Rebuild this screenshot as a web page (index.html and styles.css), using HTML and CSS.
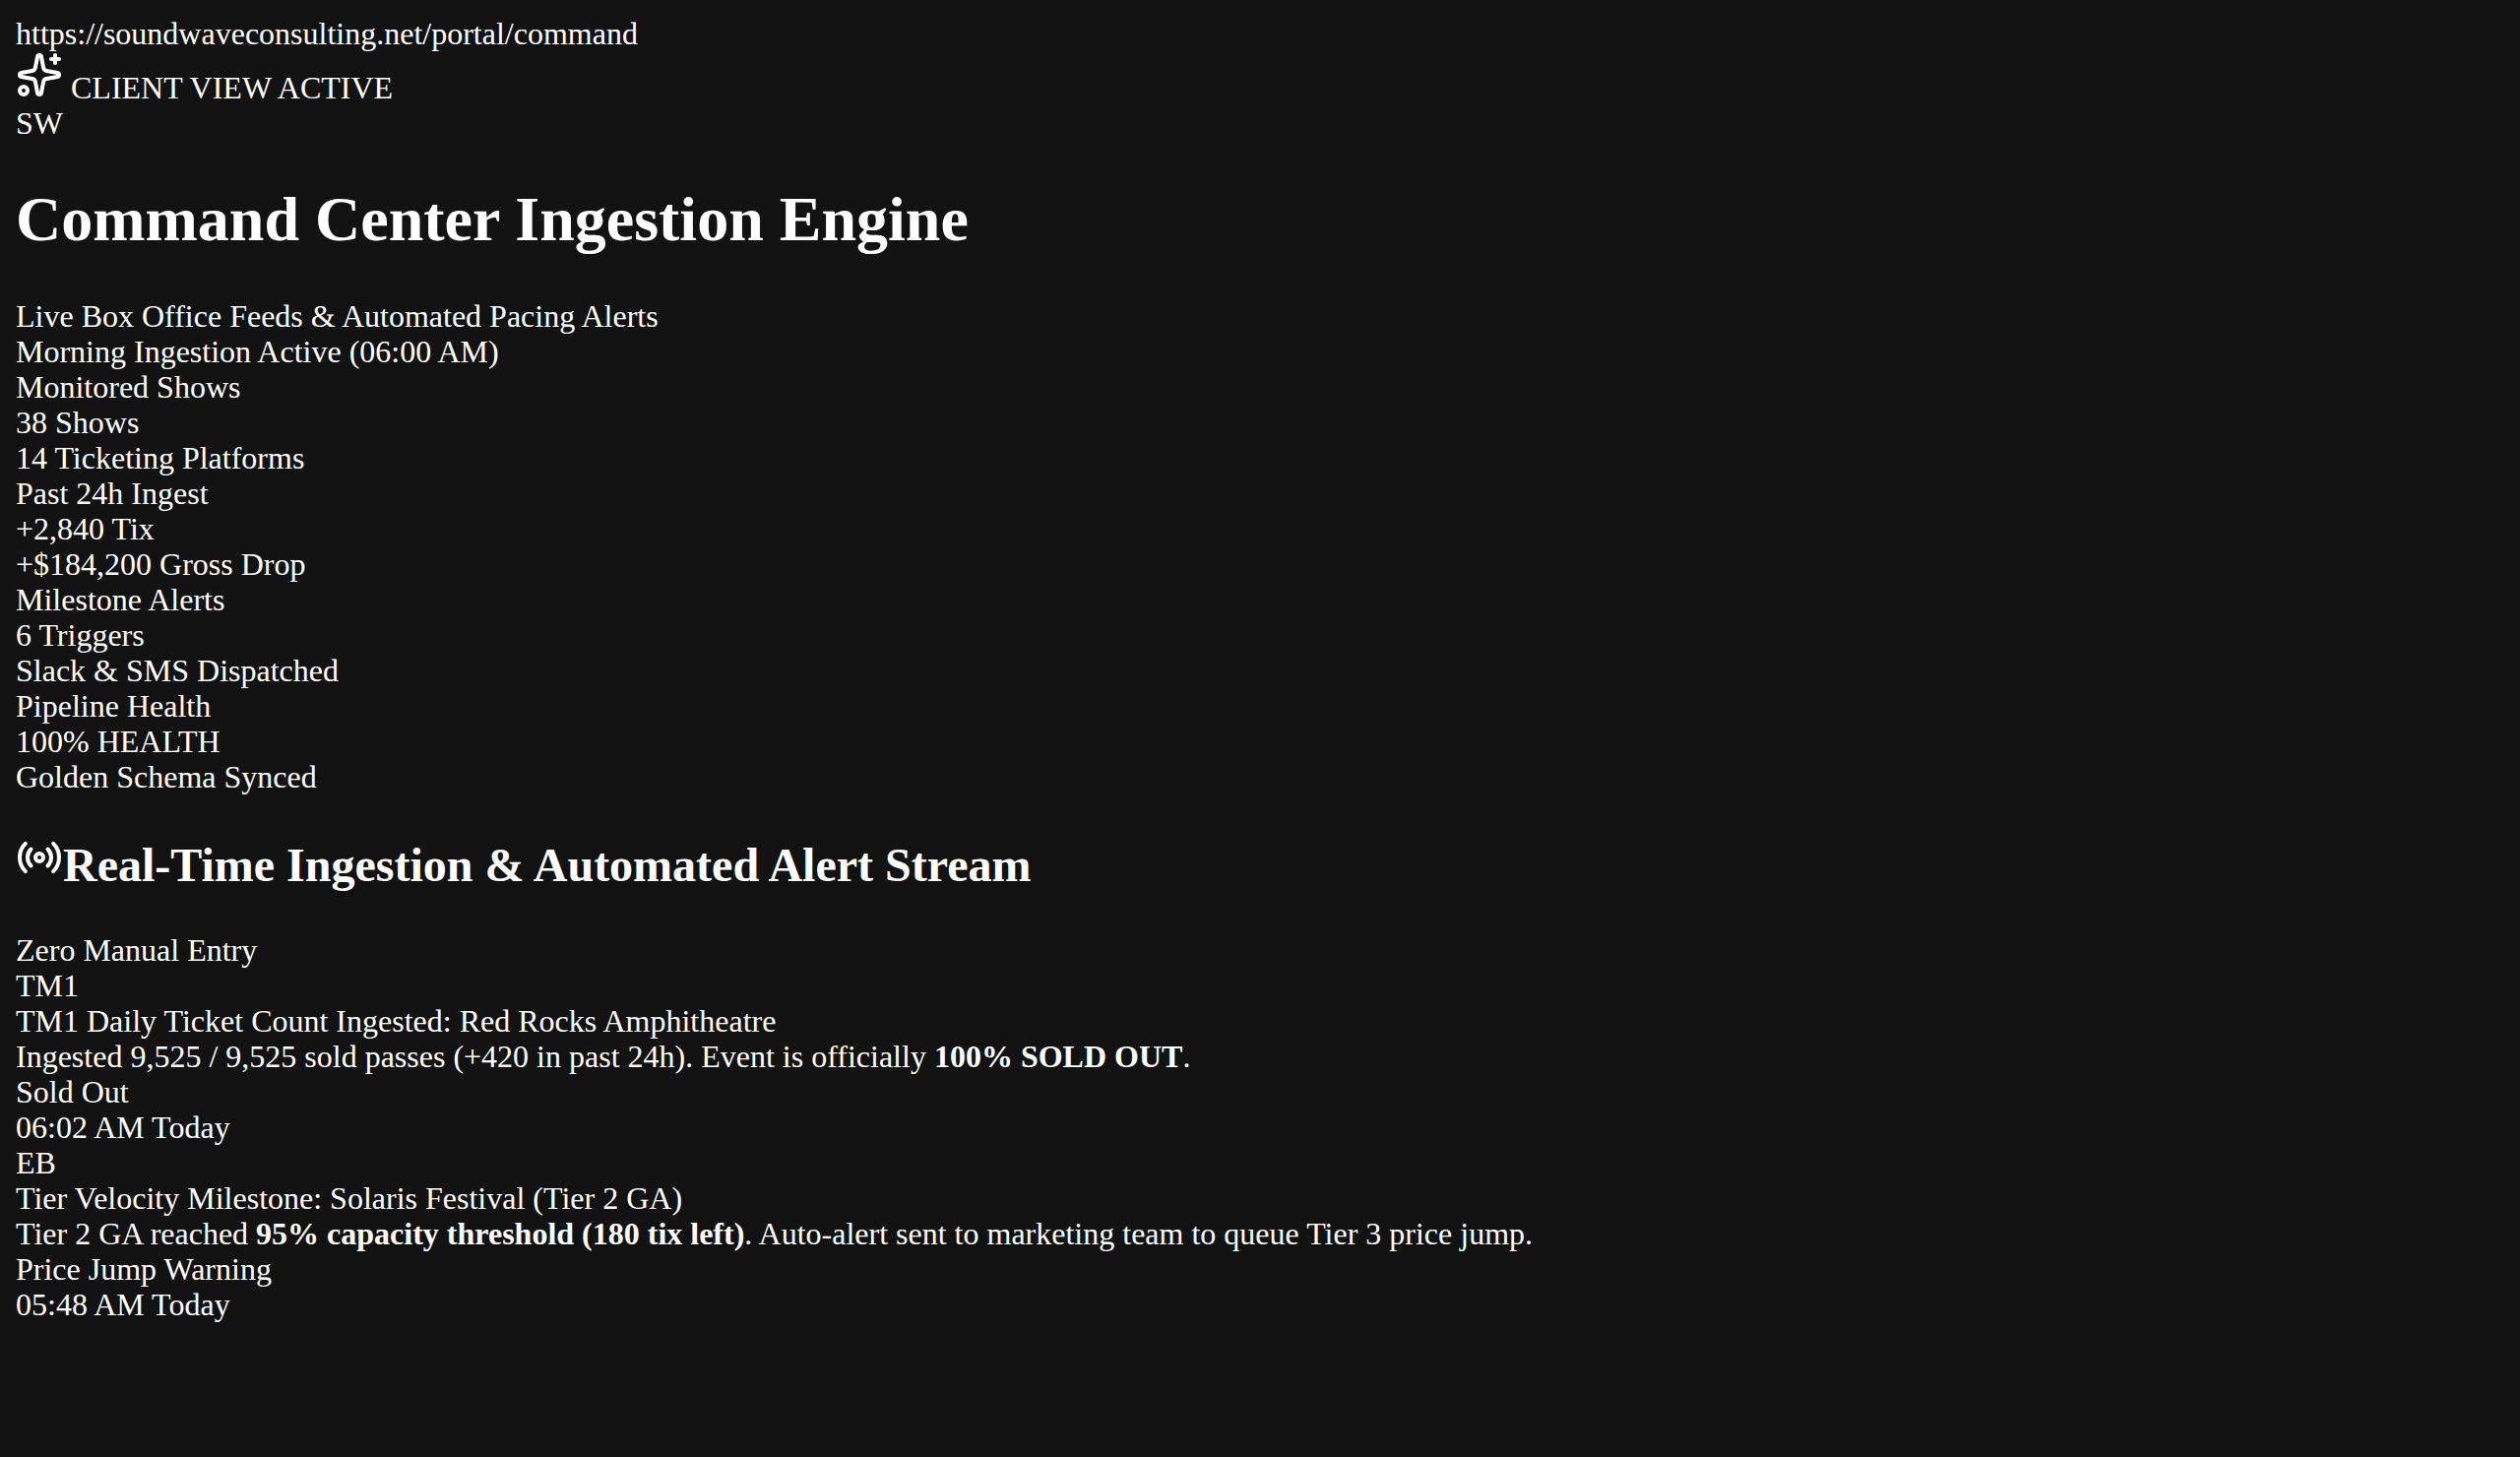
FILE: index.html
```html
<!DOCTYPE html>
<html lang="en">
<head>
  <meta charset="UTF-8">
  <title>Command Center Ingestion Engine</title>
  <link rel="stylesheet" href="styles.css">
</head>
<body>
  <header class="topbar">
    <div class="url">https://soundwaveconsulting.net/portal/command</div>
    <div class="client-view">
      <svg class="icon" viewBox="0 0 24 24" aria-hidden="true">
        <path d="M11.017 2.814a1 1 0 0 1 1.966 0l1.051 5.558a2 2 0 0 0 1.594 1.594l5.558 1.051a1 1 0 0 1 0 1.966l-5.558 1.051a2 2 0 0 0-1.594 1.594l-1.051 5.558a1 1 0 0 1-1.966 0l-1.051-5.558a2 2 0 0 0-1.594-1.594l-5.558-1.051a1 1 0 0 1 0-1.966l5.558-1.051a2 2 0 0 0 1.594-1.594z"/>
        <path d="M20 2v4"/>
        <path d="M22 4h-4"/>
        <circle cx="4" cy="20" r="2"/>
      </svg>
      <span>CLIENT VIEW ACTIVE</span>
    </div>
    <div class="avatar">SW</div>
  </header>

  <main>
    <h1>Command Center Ingestion Engine</h1>
    <div class="subtitle">Live Box Office Feeds &amp; Automated Pacing Alerts</div>
    <div class="status">Morning Ingestion Active (06:00 AM)</div>

    <section class="stats">
      <div class="stat">
        <div class="stat-label">Monitored Shows</div>
        <div class="stat-value">38 Shows</div>
        <div class="stat-note">14 Ticketing Platforms</div>
      </div>
      <div class="stat">
        <div class="stat-label">Past 24h Ingest</div>
        <div class="stat-value">+2,840 Tix</div>
        <div class="stat-note">+$184,200 Gross Drop</div>
      </div>
      <div class="stat">
        <div class="stat-label">Milestone Alerts</div>
        <div class="stat-value">6 Triggers</div>
        <div class="stat-note">Slack &amp; SMS Dispatched</div>
      </div>
      <div class="stat">
        <div class="stat-label">Pipeline Health</div>
        <div class="stat-value">100% HEALTH</div>
        <div class="stat-note">Golden Schema Synced</div>
      </div>
    </section>

    <section class="stream">
      <h2><svg class="icon" viewBox="0 0 24 24" aria-hidden="true">
        <path d="M16.247 7.761a6 6 0 0 1 0 8.478"/>
        <path d="M19.075 4.933a10 10 0 0 1 0 14.134"/>
        <path d="M4.925 19.067a10 10 0 0 1 0-14.134"/>
        <path d="M7.753 16.239a6 6 0 0 1 0-8.478"/>
        <circle cx="12" cy="12" r="2"/>
      </svg>Real-Time Ingestion &amp; Automated Alert Stream</h2>
      <div class="stream-tag">Zero Manual Entry</div>

      <article class="alert">
        <div class="alert-source">TM1</div>
        <div class="alert-title">TM1 Daily Ticket Count Ingested: Red Rocks Amphitheatre</div>
        <div class="alert-text">Ingested 9,525 / 9,525 sold passes (+420 in past 24h). Event is officially <strong>100% SOLD OUT</strong>.</div>
        <div class="alert-badge">Sold Out</div>
        <div class="alert-time">06:02 AM Today</div>
      </article>

      <article class="alert">
        <div class="alert-source">EB</div>
        <div class="alert-title">Tier Velocity Milestone: Solaris Festival (Tier 2 GA)</div>
        <div class="alert-text">Tier 2 GA reached <strong>95% capacity threshold (180 tix left)</strong>. Auto-alert sent to marketing team to queue Tier 3 price jump.</div>
        <div class="alert-badge">Price Jump Warning</div>
        <div class="alert-time">05:48 AM Today</div>
      </article>
    </section>
  </main>
</body>
</html>
```

FILE: styles.css
```css
body {
  margin: 16px;
  background-color: #121212;
  color: #ffffff;
  font-family: "Liberation Serif", "Times New Roman", serif;
  font-size: 32px;
  line-height: 36px;
}

h1 {
  margin: 43px 0;
  font-size: 64px;
  line-height: 74px;
}

h2 {
  margin: 40px 0;
  font-size: 48px;
  line-height: 56px;
}

.icon {
  width: 48px;
  height: 48px;
  fill: none;
  stroke: currentColor;
  stroke-width: 2;
  stroke-linecap: round;
  stroke-linejoin: round;
}
```
